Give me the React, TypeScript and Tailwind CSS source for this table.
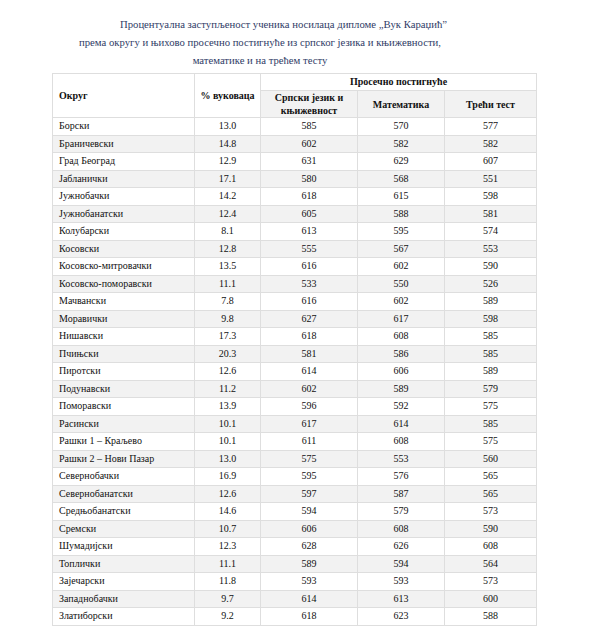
const rows: [string, string, string, string, string][] = [
  ['Борски', '13.0', '585', '570', '577'],
  ['Браничевски', '14.8', '602', '582', '582'],
  ['Град Београд', '12.9', '631', '629', '607'],
  ['Јабланички', '17.1', '580', '568', '551'],
  ['Јужнобачки', '14.2', '618', '615', '598'],
  ['Јужнобанатски', '12.4', '605', '588', '581'],
  ['Колубарски', '8.1', '613', '595', '574'],
  ['Косовски', '12.8', '555', '567', '553'],
  ['Косовско-митровачки', '13.5', '616', '602', '590'],
  ['Косовско-поморавски', '11.1', '533', '550', '526'],
  ['Мачвански', '7.8', '616', '602', '589'],
  ['Моравички', '9.8', '627', '617', '598'],
  ['Нишавски', '17.3', '618', '608', '585'],
  ['Пчињски', '20.3', '581', '586', '585'],
  ['Пиротски', '12.6', '614', '606', '589'],
  ['Подунавски', '11.2', '602', '589', '579'],
  ['Поморавски', '13.9', '596', '592', '575'],
  ['Расински', '10.1', '617', '614', '585'],
  ['Рашки 1 – Краљево', '10.1', '611', '608', '575'],
  ['Рашки 2 – Нови Пазар', '13.0', '575', '553', '560'],
  ['Севернобачки', '16.9', '595', '576', '565'],
  ['Севернобанатски', '12.6', '597', '587', '565'],
  ['Средњобанатски', '14.6', '594', '579', '573'],
  ['Сремски', '10.7', '606', '608', '590'],
  ['Шумадијски', '12.3', '628', '626', '608'],
  ['Топлички', '11.1', '589', '594', '564'],
  ['Зајечарски', '11.8', '593', '593', '573'],
  ['Западнобачки', '9.7', '614', '613', '600'],
  ['Златиборски', '9.2', '618', '623', '588'],
];

export default function App() {
  return (
    <div className="w-[589px] min-h-[629px] bg-white font-['Liberation_Serif',serif] text-[#111]">
      {/* Title */}
      <div className="w-[520px] pt-[15px] text-center text-[10.7px] leading-[18px] text-[#2f3b66]">
        <div className="pl-[47px]">Процентуална заступљеност ученика носилаца дипломе „Вук Караџић”</div>
        <div>према округу и њихово просечно постигнуће из српског језика и књижевности,</div>
        <div>математике и на трећем тесту</div>
      </div>

      {/* Table */}
      <table className="ml-[52px] mt-[4px] w-[484px] table-fixed border-collapse font-['Liberation_Serif',serif] text-[10px] text-[#111]">
        <colgroup>
          <col className="w-[142px]" />
          <col className="w-[66px]" />
          <col className="w-[97px]" />
          <col className="w-[87px]" />
          <col className="w-[92px]" />
        </colgroup>
        <thead>
          <tr className="h-[17px]">
            <th rowSpan={2} className="border border-[#dedede] bg-white px-[6px] text-left align-middle font-bold">
              Округ
            </th>
            <th rowSpan={2} className="border border-[#dedede] bg-white px-[2px] text-center align-middle font-bold">
              % вуковаца
            </th>
            <th colSpan={3} className="border border-[#dedede] bg-white p-0 text-center font-bold leading-[16px]">
              Просечно постигнуће
            </th>
          </tr>
          <tr className="h-[27px] bg-[#f2f2f2]">
            <th className="border border-[#dedede] px-[8px] text-center font-bold leading-[13px]">
              Српски језик и књижевност
            </th>
            <th className="border border-[#dedede] text-center font-bold">Математика</th>
            <th className="border border-[#dedede] text-center font-bold">Трећи тест</th>
          </tr>
        </thead>
        <tbody>
          {rows.map((r, i) => (
            <tr key={r[0]} className={i % 2 === 1 ? 'h-[17.5px] bg-[#f2f2f2]' : 'h-[17.5px] bg-white'}>
              <td className="border border-[#dedede] px-[6px] py-0 leading-[14px]">{r[0]}</td>
              <td className="border border-[#dedede] py-0 text-center leading-[14px]">{r[1]}</td>
              <td className="border border-[#dedede] py-0 text-center leading-[14px]">{r[2]}</td>
              <td className="border border-[#dedede] py-0 text-center leading-[14px]">{r[3]}</td>
              <td className="border border-[#dedede] py-0 text-center leading-[14px]">{r[4]}</td>
            </tr>
          ))}
        </tbody>
      </table>
    </div>
  );
}
